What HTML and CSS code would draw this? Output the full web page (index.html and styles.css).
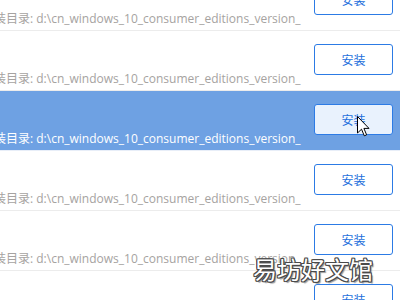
FILE: index.html
```html
<!DOCTYPE html>
<html lang="zh-CN">
<head>
<meta charset="utf-8">
<link rel="stylesheet" href="styles.css">
</head>
<body>
<div class="viewport">
  <ul class="list">
    <li class="row">
      <div class="info"><span class="path">安装目录: d:\cn_windows_10_consumer_editions_version_</span></div>
      <button class="install">安装</button>
    </li>
    <li class="row">
      <div class="info"><span class="path">安装目录: d:\cn_windows_10_consumer_editions_version_</span></div>
      <button class="install">安装</button>
    </li>
    <li class="row active">
      <div class="info"><span class="path">安装目录: d:\cn_windows_10_consumer_editions_version_</span></div>
      <button class="install">安装</button>
    </li>
    <li class="row">
      <div class="info"><span class="path">安装目录: d:\cn_windows_10_consumer_editions_version_</span></div>
      <button class="install">安装</button>
    </li>
    <li class="row">
      <div class="info"><span class="path">安装目录: d:\cn_windows_10_consumer_editions_version_</span></div>
      <button class="install">安装</button>
    </li>
    <li class="row">
      <div class="info"><span class="path">安装目录: d:\cn_windows_10_consumer_editions_version_</span></div>
      <button class="install">安装</button>
    </li>
  </ul>
  <svg class="cursor" width="13" height="21" viewBox="0 0 13 21">
    <path d="M0.5 0.5 L0.5 17 L4.5 13.2 L7.3 19.8 L9.6 18.8 L6.9 12.4 L12 12.4 Z" fill="#fff" stroke="#000" stroke-width="1" stroke-linejoin="round"/>
  </svg>
  <div class="watermark">易坊好文馆</div>
</div>
</body>
</html>
```
FILE: styles.css
```css
html, body {
  margin: 0;
  padding: 0;
  background: #fff;
}
.viewport {
  position: relative;
  width: 400px;
  height: 300px;
  overflow: hidden;
  font-family: "Open Sans", "Noto Sans CJK SC", sans-serif;
}
.list {
  list-style: none;
  margin: -29px 0 0 -18px;
  padding: 0;
}
.row {
  display: flex;
  justify-content: space-between;
  align-items: flex-start;
  height: 59px;
  border-bottom: 1px solid #ececec;
  padding-right: 7px;
}
.row.active {
  background: #6ea1e3;
  border-bottom-color: #e8eef8;
}
.info {
  padding-top: 35px;
}
.path {
  font-size: 12px;
  line-height: 16px;
  color: #a6a3a1;
  white-space: nowrap;
}
.active .path {
  color: #fff;
}
.install {
  margin-top: 13px;
  width: 79px;
  height: 31px;
  border: 1px solid #2c7be5;
  border-radius: 3px;
  background: #fff;
  color: #1d6fdc;
  font-family: "Noto Sans CJK SC", sans-serif;
  font-size: 12px;
  padding: 0;
}
.active .install {
  background: #e9f2fd;
}
.cursor {
  position: absolute;
  left: 357px;
  top: 116px;
}
.watermark {
  position: absolute;
  left: 253px;
  top: 252px;
  font-family: "Noto Sans CJK SC", sans-serif;
  font-size: 24px;
  line-height: 34px;
  color: #fff;
  text-shadow: 1px 0 0 #4a4a4a, -1px 0 0 #4a4a4a, 0 1px 0 #4a4a4a, 0 -1px 0 #4a4a4a,
    1px 1px 0 #4a4a4a, -1px -1px 0 #4a4a4a, 1px -1px 0 #4a4a4a, -1px 1px 0 #4a4a4a,
    2px 2px 1px #9a9a9a;
}
```
